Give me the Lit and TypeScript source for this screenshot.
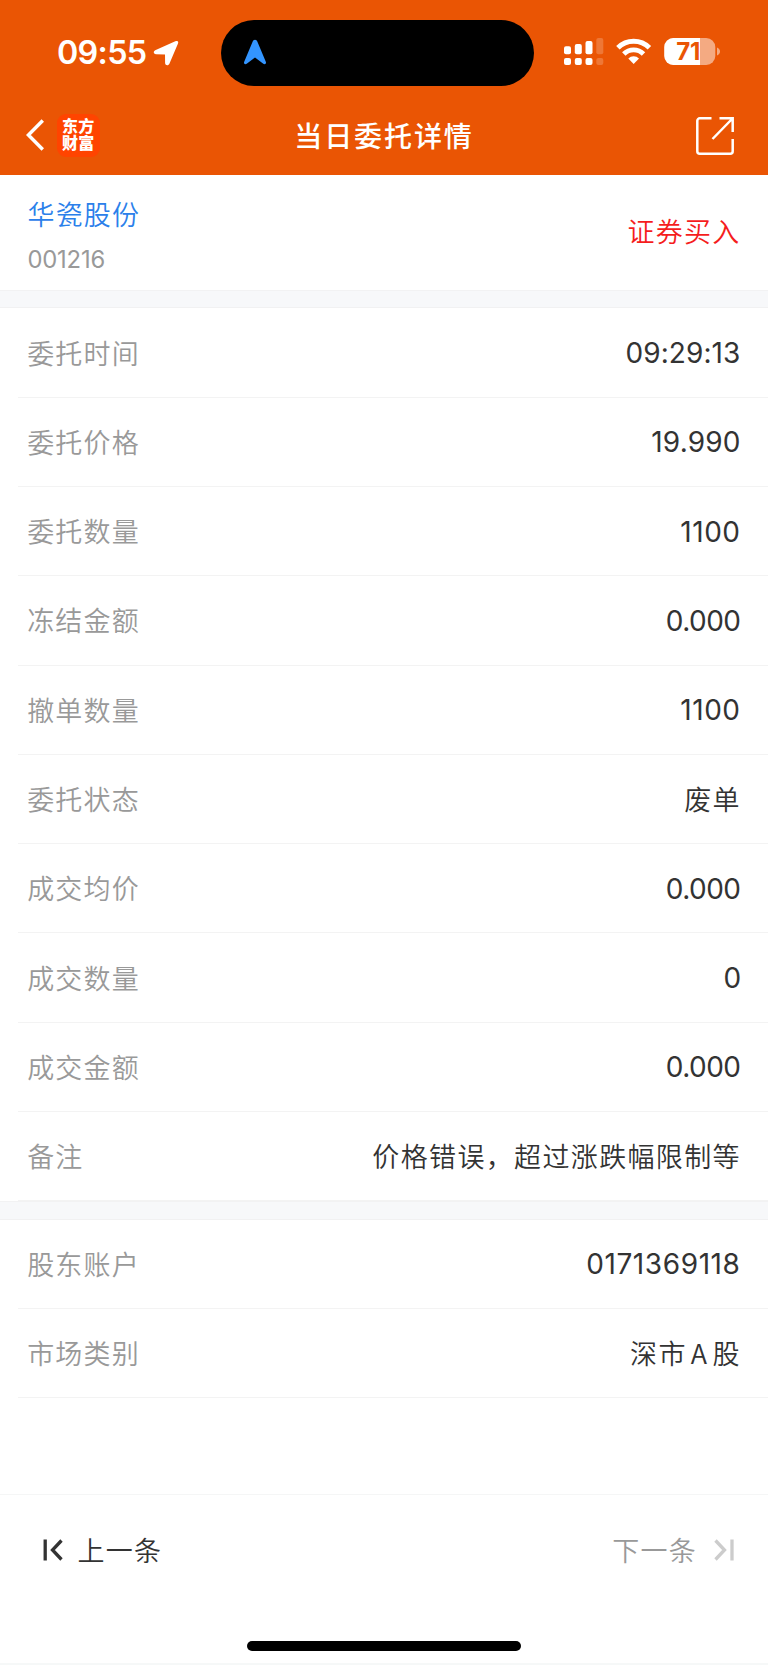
import { LitElement, html, css } from "lit";
import { customElement, property } from "lit/decorators.js";
import { styleMap } from "lit/directives/style-map.js";

type Field = { label: string; value: string; cjk?: boolean };

const ORDER: Field[] = [
  { label: "委托时间", value: "09:29:13" },
  { label: "委托价格", value: "19.990" },
  { label: "委托数量", value: "1100" },
  { label: "冻结金额", value: "0.000" },
  { label: "撤单数量", value: "1100" },
  { label: "委托状态", value: "废单", cjk: true },
  { label: "成交均价", value: "0.000" },
  { label: "成交数量", value: "0" },
  { label: "成交金额", value: "0.000" },
  { label: "备注", value: "价格错误，超过涨跌幅限制等", cjk: true },
];

const ACCOUNT: Field[] = [
  { label: "股东账户", value: "0171369118" },
  { label: "市场类别", value: "深市 A 股", cjk: true },
];

function tracking(value: string): number {
  const ones = value.split("1").length - 1;
  const zeros = value.split("0").length - 1;
  return (ones * 1.75 - zeros * 0.6) / value.length - 0.05;
}

@customElement("status-bar")
class StatusBar extends LitElement {
  static styles = css`
    :host { display: grid; grid-template-columns: 221px 313px 234px; height: 106px; box-sizing: border-box; padding-top: 20px; }
    .left { display: flex; align-items: center; height: 65px; padding-left: 57px; gap: 6.500px; box-sizing: border-box; }
    .time { font: 600 32.3px/40px Inter, sans-serif; letter-spacing: -0.7px; color: #fff; padding-top: 1px; }
    .island { height: 66px; border-radius: 33px; background: #000; box-sizing: border-box; padding: 18.5px 0 0 22px; }
    .right { display: block; height: 66px; padding-left: 30px; box-sizing: border-box; padding-top: 17px; }
    svg { display: block; }
    .pct { font: 700 24px Inter, sans-serif; fill: #ea5504; letter-spacing: -0.3px; }
  `;
  render() {
    return html`
      <div class="left">
        <span class="time">09:55</span>
        <svg width="26" height="26" viewBox="0 0 26 26"><path d="M24.6 1.2c.8.5.7 1.3.4 2.2L16.400 23.800c-1.200 2.400-4.200 1.700-4.300-.8L12 14.400 3 14.200C.4 14 0 11.300 2.200 10.200L22.300 1.300c.9-.4 1.700-.5 2.300-.1z" fill="#fff"/></svg>
      </div>
      <div class="island">
        <svg width="24" height="26" viewBox="0 0 24 26"><path d="M12 .8c1.200 0 1.800.7 2.300 1.700L22.800 22.800c.8 1.900-.9 3.100-2.500 1.900L12 18.600 3.700 24.700C2.100 25.900.4 24.700 1.200 22.800L9.700 2.500C10.200 1.500 10.800.8 12 .8z" fill="#3395ff"/></svg>
      </div>
      <div class="right">
        <svg width="160" height="30" viewBox="0 0 160 30">
          <g fill="#fff">
            <rect x="0" y="9.300" width="7" height="8" rx="2"/><rect x="10.800" y="7" width="7" height="10.300" rx="2"/>
            <rect x="21.500" y="4" width="7" height="13.300" rx="2"/><rect x="32.300" y="1" width="7" height="16.300" rx="2" opacity=".2"/>
            <rect x="0" y="21" width="7" height="7" rx="2"/><rect x="10.800" y="21" width="7" height="7" rx="2"/>
            <rect x="21.500" y="21" width="7" height="7" rx="2"/><rect x="32.300" y="21" width="7" height="7" rx="2" opacity=".2"/>
          </g>
          <g fill="none" stroke="#fff" stroke-width="4.900">
            <path d="M53.900 10.800a22.300 22.300 0 0 1 31.500 0"/><path d="M59.800 16.900a14 14 0 0 1 19.700 0"/>
          </g>
          <path d="M64.300 21.400a7.600 7.600 0 0 1 10.700 0L69.650 27z" fill="#fff"/>
          <rect x="100.300" y="1" width="51" height="27" rx="9" fill="#f4aa82"/>
          <path d="M109.300 1H136V28H109.300a9 9 0 0 1-9-9V10a9 9 0 0 1 9-9z" fill="#fff"/>
          <path d="M153 10.500c4 1.500 4 6.500 0 8z" fill="#f4aa82"/>
          <text class="pct" x="112.300" y="23.300">71</text>
        </svg>
      </div>`;
  }
}

@customElement("nav-bar")
class NavBar extends LitElement {
  static styles = css`
    :host { display: grid; grid-template-columns: 1fr auto 1fr; align-items: center; height: 58.500px; padding: 0 34px 0 26px; color: #fff; }
    .start { display: flex; align-items: center; gap: 13px; }
    .end { display: flex; justify-content: flex-end; padding-top: 1px; }
    .brand { width: 43px; height: 43px; border-radius: 9px; background: #ff4400; display: flex; align-items: center; justify-content: center; padding-bottom: 2px; box-sizing: border-box; }
    .brand span { width: 34px; font: 800 16px/17.500px "Noto Sans CJK SC", sans-serif; letter-spacing: 0.200px; word-break: break-all; padding-left: 1px; }
    .title { font: 500 28px/40px "Noto Sans CJK SC", sans-serif; letter-spacing: 1.9px; padding-left: 8px; }
    svg { display: block; }
  `;
  render() {
    return html`
      <div class="start">
        <svg width="18" height="32" viewBox="0 0 18 32"><path d="M16.800 1.500L2.400 16 16.800 30.500" fill="none" stroke="#fff" stroke-width="3.500"/></svg>
        <div class="brand"><span>东方财富</span></div>
      </div>
      <div class="title">当日委托详情</div>
      <div class="end">
        <svg width="38" height="38" viewBox="0 0 38 38"><g fill="none" stroke="#fff" stroke-width="2.500"><path d="M15.500 1.300H3.800a2.500 2.500 0 0 0-2.500 2.500V34.200a2.500 2.500 0 0 0 2.500 2.500H34.200a2.500 2.500 0 0 0 2.500-2.500V22"/><path d="M23.500 1.300H36.700V15M36.500 1.500L16.500 22"/></g></svg>
      </div>`;
  }
}

@customElement("field-list")
class FieldList extends LitElement {
  @property({ attribute: false }) fields: Field[] = [];
  static styles = css`
    :host { display: block; background: #fff; }
    .row { height: 89.300px; box-sizing: border-box; margin-left: 18px; padding: 0 28px 0 9.200px; border-bottom: 1px solid #f3f3f3; display: flex; align-items: center; justify-content: space-between; }
    .label, .cjk { font: 350 27px/40px "Noto Sans CJK SC", sans-serif; letter-spacing: 1.150px; color: #999; }
    .value { font: 400 28px/40px Inter, sans-serif; color: #333; padding-top: 1.200px; margin-right: -0.500px; }
    .value.cjk { font: 350 27px/40px "Noto Sans CJK SC", sans-serif; letter-spacing: 1.350px; word-spacing: -3.300px; padding-top: 0; margin-right: -0.900px; color: #333; }
  `;
  render() {
    return this.fields.map(
      (f) => html`<div class="row"><span class="label">${f.label}</span>${f.cjk
        ? html`<span class="value cjk">${f.value}</span>`
        : html`<span class="value" style=${styleMap({ letterSpacing: `${tracking(f.value).toFixed(2)}px` })}>${f.value}</span>`}</div>`
    );
  }
}

@customElement("app-root")
class AppRoot extends LitElement {
  static styles = css`
    :host { display: flex; flex-direction: column; height: 1665px; width: 768px; background: #fff; overflow: hidden; }
    .head { background: #ea5504; height: 174.500px; flex: none; }
    .stock { height: 115.700px; flex: none; box-sizing: border-box; padding: 0 27.500px; display: flex; justify-content: space-between; align-items: center; background: #fff; }
    .name { font: 350 27px/40px "Noto Sans CJK SC", sans-serif; letter-spacing: 1.150px; color: #2b80ea; margin-top: 5px; }
    .code { font: 400 23.800px/32px Inter, sans-serif; letter-spacing: -0.200px; color: #999; margin-top: 9.500px; }
    .side { font: 350 27px/40px "Noto Sans CJK SC", sans-serif; letter-spacing: 1.250px; color: #f51d1d; padding-bottom: 3px; }
    .gap { height: 18.200px; flex: none; box-sizing: border-box; background: #f7f8fa; border-top: 1px solid #f2f2f3; border-bottom: 1.500px solid #f1f1f2; }
    .foot { margin-top: auto; height: 171px; flex: none; box-sizing: border-box; border-top: 1px solid #f5f6f6; border-bottom: 2px solid #f6f8f8; display: flex; flex-direction: column; align-items: center; }
    .pager { width: 100%; height: 109px; box-sizing: border-box; padding: 0 34px 0 43px; display: flex; justify-content: space-between; align-items: center; }
    .prev, .next { display: flex; align-items: center; font: 350 27px/40px "Noto Sans CJK SC", sans-serif; letter-spacing: 1.250px; color: #333; gap: 14.500px; }
    .next { color: #999; gap: 17px; }
    .home { width: 274px; height: 9.500px; border-radius: 5px; background: #000; margin-top: 37px; }
    svg { display: block; }
  `;
  render() {
    return html`
      <header class="head"><status-bar></status-bar><nav-bar></nav-bar></header>
      <section class="stock">
        <div><div class="name">华瓷股份</div><div class="code">001216</div></div>
        <div class="side">证券买入</div>
      </section>
      <div class="gap"></div>
      <field-list .fields=${ORDER}></field-list>
      <div class="gap"></div>
      <field-list .fields=${ACCOUNT}></field-list>
      <footer class="foot">
        <div class="pager">
          <div class="prev"><svg width="20" height="22" viewBox="0 0 20 22"><path d="M2.200 .5V21.500M18.500 1.500L9.500 11 18.500 20.500" fill="none" stroke="#333" stroke-width="3.300"/></svg>上一条</div>
          <div class="next">下一条<svg width="20" height="22" viewBox="0 0 20 22"><path d="M18 .5V21.500M1.500 1.500L10.500 11 1.500 20.500" fill="none" stroke="#ccc" stroke-width="3.300"/></svg></div>
        </div>
        <div class="home"></div>
      </footer>`;
  }
}
